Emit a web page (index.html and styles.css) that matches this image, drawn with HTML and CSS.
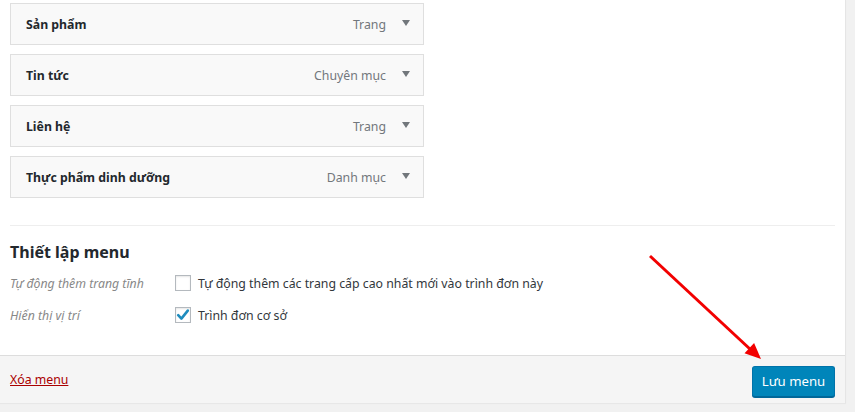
FILE: index.html
```html
<!DOCTYPE html>
<html lang="vi">
<head>
<meta charset="utf-8">
<title>Menu</title>
<link rel="stylesheet" href="styles.css">
</head>
<body>
<div class="panel">
  <div class="content">
    <ul class="items">
      <li class="item"><span class="item-title">Sản phẩm</span><span class="item-type">Trang</span><span class="caret"></span></li>
      <li class="item"><span class="item-title">Tin tức</span><span class="item-type">Chuyên mục</span><span class="caret"></span></li>
      <li class="item"><span class="item-title">Liên hệ</span><span class="item-type">Trang</span><span class="caret"></span></li>
      <li class="item"><span class="item-title">Thực phẩm dinh dưỡng</span><span class="item-type">Danh mục</span><span class="caret"></span></li>
    </ul>
    <div class="settings">
      <h3 class="settings-title">Thiết lập menu</h3>
      <div class="row">
        <div class="row-label">Tự động thêm trang tĩnh</div>
        <label class="check"><span class="box"></span>Tự động thêm các trang cấp cao nhất mới vào trình đơn này</label>
      </div>
      <div class="row">
        <div class="row-label">Hiển thị vị trí</div>
        <label class="check"><span class="box checked"><svg viewBox="0 0 16 16" width="16" height="16"><path d="M3.2 8.2 L6.4 11.6 L12.8 3.6" fill="none" stroke="#1e8cbe" stroke-width="2.6" stroke-linecap="round" stroke-linejoin="round"/></svg></span>Trình đơn cơ sở</label>
      </div>
    </div>
  </div>
  <div class="footer">
    <a class="delete" href="#">Xóa menu</a>
    <button class="save" type="button">Lưu menu</button>
  </div>
</div>
<svg class="annot" width="855" height="412" viewBox="0 0 855 412">
  <line x1="650" y1="256" x2="751" y2="350" stroke="#f20000" stroke-width="3"/>
  <polygon points="761,359 744.5,353.2 754.1,343" fill="#f20000"/>
</svg>
</body>
</html>
```
FILE: styles.css
```css
html, body {
  margin: 0;
  padding: 0;
}
body {
  background: #f1f1f1;
  font-family: "Noto Sans", "Open Sans", sans-serif;
  font-size: 12.3px;
  color: #23282d;
  height: 412px;
  overflow: hidden;
  position: relative;
}
.panel {
  width: 845px;
  background: #fff;
  border-right: 1px solid #e5e5e5;
  box-shadow: 0 1px 1px rgba(0,0,0,0.04);
}
.content {
  padding: 3px 10px 0 10px;
}
.items {
  list-style: none;
  margin: 0;
  padding: 0;
  width: 414px;
}
.item {
  box-sizing: border-box;
  height: 42px;
  margin-bottom: 9px;
  border: 1px solid #dfdfdf;
  background: #f9f9f9;
  display: flex;
  align-items: center;
  padding: 0 13px 0 15px;
}
.item:last-child {
  margin-bottom: 0;
}
.item-title {
  font-weight: 700;
  color: #23282d;
  flex: 1;
}
.item-type {
  color: #72777c;
  margin-right: 16px;
}
.caret {
  width: 0;
  height: 0;
  border-left: 4px solid transparent;
  border-right: 4px solid transparent;
  border-top: 6px solid #72777c;
  margin-top: -3px;
}
.settings {
  margin-top: 27px;
  border-top: 1px solid #eeeeee;
  padding-top: 14px;
  padding-bottom: 24px;
}
.settings-title {
  margin: 0 0 3px 0;
  font-size: 16px;
  font-weight: 700;
  line-height: 24px;
  color: #23282d;
}
.row {
  display: flex;
  align-items: center;
  height: 32px;
}
.row-label {
  width: 165px;
  font-style: italic;
  color: #888;
}
.check {
  display: flex;
  align-items: center;
  color: #32373c;
}
.box {
  box-sizing: border-box;
  width: 16px;
  height: 16px;
  border: 1px solid #b4b9be;
  background: #fff;
  box-shadow: inset 0 1px 2px rgba(0,0,0,0.1);
  margin-right: 7px;
  display: flex;
  align-items: center;
  justify-content: center;
}
.box svg {
  display: block;
  margin: -1px;
}
.footer {
  box-sizing: border-box;
  height: 48px;
  border-top: 1px solid #dddddd;
  background: #f5f5f5;
  display: flex;
  align-items: center;
  justify-content: space-between;
  padding: 0 10px;
}
.delete {
  color: #a00;
  text-decoration: underline;
  font-size: 12.3px;
}
.save {
  box-sizing: border-box;
  width: 83px;
  height: 31px;
  margin-top: 3px;
  background: #0085ba;
  border: 1px solid #0073aa;
  border-bottom-color: #006799;
  box-shadow: 0 1px 0 #006799;
  border-radius: 3px;
  color: #fff;
  font-family: "Noto Sans", "Open Sans", sans-serif;
  font-size: 13.2px;
  padding: 0;
}
.annot {
  position: absolute;
  left: 0;
  top: 0;
  pointer-events: none;
}
```
